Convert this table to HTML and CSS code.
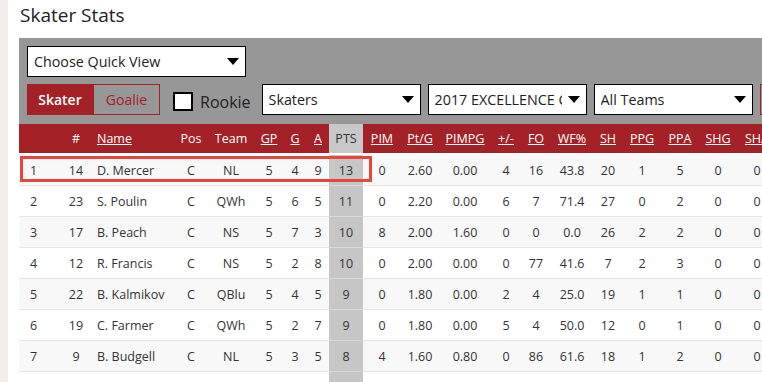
FILE: index.html
```html
<!DOCTYPE html>
<html>
<head>
<meta charset="utf-8">
<title>Skater Stats</title>
<link rel="stylesheet" href="styles.css">
</head>
<body>
<div class="side"></div>
<main class="page">
  <h1 class="title">Skater Stats</h1>
  <div class="panel">
    <div class="qv-row">
      <div class="select qv"><span class="sel-text">Choose Quick View</span><span class="arrow"></span></div>
    </div>
    <div class="controls">
      <div class="toggle"><span class="tg on">Skater</span><span class="tg off">Goalie</span></div>
      <label class="rookie"><span class="box"></span><span>Rookie</span></label>
      <div class="select"><span class="sel-text">Skaters</span><span class="arrow"></span></div>
      <div class="select"><span class="sel-text">2017 EXCELLENCE CUP</span><span class="arrow"></span></div>
      <div class="select"><span class="sel-text">All Teams</span><span class="arrow"></span></div>
      <div class="extra">Reset</div>
    </div>
  </div>
  <div class="table-wrap">
    <table class="stats">
      <colgroup>
        <col class="c-rank"><col class="c-num"><col class="c-name"><col class="c-pos"><col class="c-team">
        <col class="c-gp"><col class="c-g"><col class="c-a"><col class="c-pts"><col class="c-pim">
        <col class="c-ptg"><col class="c-pimpg"><col class="c-pm"><col class="c-fo"><col class="c-wf">
        <col class="c-sh"><col class="c-ppg"><col class="c-ppa"><col class="c-shg"><col class="c-sha">
        <col class="c-x"><col class="c-x">
      </colgroup>
      <thead>
        <tr>
          <th></th><th>#</th><th class="name"><u>Name</u></th><th>Pos</th><th>Team</th>
          <th><u>GP</u></th><th><u>G</u></th><th><u>A</u></th><th class="pts">PTS</th><th><u>PIM</u></th>
          <th><u>Pt/G</u></th><th><u>PIMPG</u></th><th><u>+/-</u></th><th><u>FO</u></th><th><u>WF%</u></th>
          <th><u>SH</u></th><th><u>PPG</u></th><th><u>PPA</u></th><th><u>SHG</u></th><th><u>SHA</u></th>
          <th><u>GWG</u></th><th><u>S%</u></th>
        </tr>
      </thead>
      <tbody>
        <tr><td class="rank">1</td><td>14</td><td class="name">D. Mercer</td><td>C</td><td>NL</td><td>5</td><td>4</td><td>9</td><td class="pts">13</td><td>0</td><td>2.60</td><td>0.00</td><td>4</td><td>16</td><td>43.8</td><td>20</td><td>1</td><td>5</td><td>0</td><td>0</td><td>1</td><td>20.0</td></tr>
        <tr><td class="rank">2</td><td>23</td><td class="name">S. Poulin</td><td>C</td><td>QWh</td><td>5</td><td>6</td><td>5</td><td class="pts">11</td><td>0</td><td>2.20</td><td>0.00</td><td>6</td><td>7</td><td>71.4</td><td>27</td><td>0</td><td>2</td><td>0</td><td>0</td><td>1</td><td>22.2</td></tr>
        <tr><td class="rank">3</td><td>17</td><td class="name">B. Peach</td><td>C</td><td>NS</td><td>5</td><td>7</td><td>3</td><td class="pts">10</td><td>8</td><td>2.00</td><td>1.60</td><td>0</td><td>0</td><td>0.0</td><td>26</td><td>2</td><td>2</td><td>0</td><td>0</td><td>2</td><td>26.9</td></tr>
        <tr><td class="rank">4</td><td>12</td><td class="name">R. Francis</td><td>C</td><td>NS</td><td>5</td><td>2</td><td>8</td><td class="pts">10</td><td>0</td><td>2.00</td><td>0.00</td><td>0</td><td>77</td><td>41.6</td><td>7</td><td>2</td><td>3</td><td>0</td><td>0</td><td>0</td><td>28.6</td></tr>
        <tr><td class="rank">5</td><td>22</td><td class="name">B. Kalmikov</td><td>C</td><td>QBlu</td><td>5</td><td>4</td><td>5</td><td class="pts">9</td><td>0</td><td>1.80</td><td>0.00</td><td>2</td><td>4</td><td>25.0</td><td>19</td><td>1</td><td>1</td><td>0</td><td>0</td><td>1</td><td>21.1</td></tr>
        <tr><td class="rank">6</td><td>19</td><td class="name">C. Farmer</td><td>C</td><td>QWh</td><td>5</td><td>2</td><td>7</td><td class="pts">9</td><td>0</td><td>1.80</td><td>0.00</td><td>5</td><td>4</td><td>50.0</td><td>12</td><td>0</td><td>1</td><td>0</td><td>0</td><td>0</td><td>16.7</td></tr>
        <tr><td class="rank">7</td><td>9</td><td class="name">B. Budgell</td><td>C</td><td>NL</td><td>5</td><td>3</td><td>5</td><td class="pts">8</td><td>4</td><td>1.60</td><td>0.80</td><td>0</td><td>86</td><td>61.6</td><td>18</td><td>1</td><td>2</td><td>0</td><td>0</td><td>1</td><td>16.7</td></tr>
        <tr><td class="rank">8</td><td>11</td><td class="name">J. Roy</td><td>C</td><td>NS</td><td>5</td><td>3</td><td>4</td><td class="pts">7</td><td>2</td><td>1.40</td><td>0.40</td><td>1</td><td>10</td><td>40.0</td><td>15</td><td>0</td><td>1</td><td>0</td><td>0</td><td>0</td><td>20.0</td></tr>
      </tbody>
    </table>
    <div class="highlight"></div>
  </div>
</main>
</body>
</html>
```

FILE: styles.css
```css
html, body {
  margin: 0;
  padding: 0;
}
body {
  display: flex;
  height: 382px;
  overflow: hidden;
  background: #fff;
  font-family: "Open Sans", "Noto Sans", sans-serif;
  color: #333;
}
.side {
  flex: none;
  width: 8px;
  background: #f0efeb;
}
.page {
  flex: 1;
  min-width: 0;
  overflow: hidden;
  padding-left: 11px;
}
.title {
  margin: 0;
  padding-left: 1px;
  height: 38px;
  font-size: 19px;
  line-height: 30px;
  font-weight: 400;
  color: #222;
}
.panel {
  background: #979797;
  padding: 8px 0 9px 8px;
  overflow: hidden;
}
.qv-row {
  display: flex;
  margin-bottom: 7px;
}
.select {
  flex: none;
  box-sizing: border-box;
  width: 159px;
  height: 31px;
  background: #fff;
  border: 1px solid #000;
  display: flex;
  align-items: center;
  padding: 0 6px 0 6px;
  font-size: 14.3px;
  color: #222;
  gap: 6px;
}
.select.qv {
  width: 219px;
  padding-left: 6px;
}
.sel-text {
  flex: 1;
  min-width: 0;
  overflow: hidden;
  white-space: nowrap;
}
.arrow {
  flex: none;
  width: 0;
  height: 0;
  border-left: 6px solid transparent;
  border-right: 6px solid transparent;
  border-top: 7px solid #000;
}
.controls {
  display: flex;
  align-items: center;
  gap: 7px;
  height: 31px;
  white-space: nowrap;
}
.toggle {
  flex: none;
  display: flex;
  height: 31px;
}
.tg {
  box-sizing: border-box;
  display: flex;
  align-items: center;
  justify-content: center;
  font-size: 14px;
}
.tg.on {
  width: 66px;
  background: #a32127;
  color: #fff;
  font-weight: 600;
}
.tg.off {
  width: 67px;
  border: 1px solid #a32127;
  color: #a32127;
}
.rookie {
  flex: none;
  display: flex;
  align-items: center;
  gap: 7px;
  margin-left: 6px;
  margin-right: 4px;
  font-size: 16px;
  color: #222;
  padding-top: 4px;
}
.box {
  box-sizing: border-box;
  width: 20px;
  height: 19px;
  background: #fff;
  border: 2px solid #000;
}
.extra {
  flex: none;
  box-sizing: border-box;
  height: 31px;
  padding: 0 12px;
  border: 1px solid #a32127;
  color: #a32127;
  display: flex;
  align-items: center;
  font-size: 14px;
}
.table-wrap {
  position: relative;
}
.stats {
  table-layout: fixed;
  width: 838px;
  border-collapse: collapse;
  font-size: 12.5px;
}
.c-rank { width: 45px; }
.c-num { width: 24px; }
.c-name { width: 87px; }
.c-pos { width: 32px; }
.c-team { width: 48px; }
.c-gp { width: 28px; }
.c-g { width: 24px; }
.c-a { width: 22px; }
.c-pts { width: 34px; }
.c-pim { width: 38px; }
.c-ptg { width: 38px; }
.c-pimpg { width: 52px; }
.c-pm { width: 30px; }
.c-fo { width: 30px; }
.c-wf { width: 42px; }
.c-sh { width: 30px; }
.c-ppg { width: 38px; }
.c-ppa { width: 38px; }
.c-shg { width: 38px; }
.c-sha { width: 40px; }
.c-x { width: 40px; }
.stats th {
  height: 29px;
  padding: 0;
  background: #a32127;
  color: #fff;
  font-weight: 400;
  text-align: center;
  border-bottom: 2px solid #fff;
  white-space: nowrap;
}
.stats th.pts {
  background: #c8c8c8;
  color: #333;
}
.stats td {
  height: 30px;
  padding: 0;
  text-align: center;
  border-bottom: 1px solid #e6e6e6;
  white-space: nowrap;
}
.stats th.name, .stats td.name {
  text-align: left;
  padding-left: 9px;
}
.stats td.rank {
  text-align: left;
  padding-left: 11px;
}
.stats tbody tr:nth-child(odd) td {
  background: #f8f8f8;
}
.stats tbody tr:nth-child(even) td {
  background: #fff;
}
.stats tbody tr td.pts {
  background: #c6c6c6;
  border-bottom-color: #dadada;
}
.highlight {
  position: absolute;
  left: 1px;
  top: 32px;
  width: 352px;
  height: 26px;
  box-sizing: border-box;
  border: 3px solid #e8453f;
}
```
